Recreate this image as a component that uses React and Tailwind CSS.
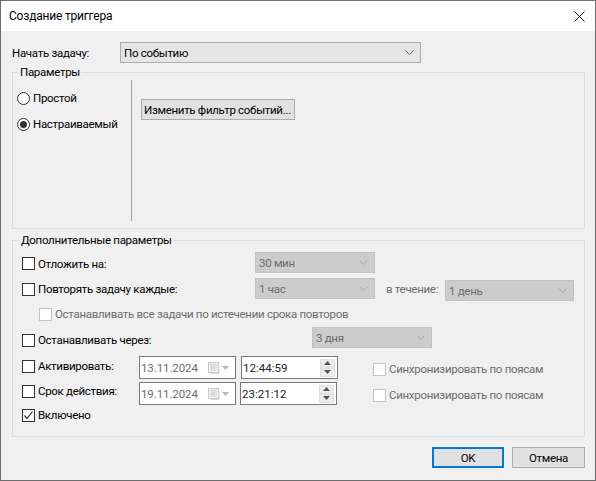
import React from "react";

function Chevron({ disabled }) {
  return (
    <svg width="9" height="5" viewBox="0 0 9 5" className="shrink-0">
      <polyline
        points="0.5,0.5 4.5,4.5 8.5,0.5"
        fill="none"
        stroke={disabled ? "#a8a8a8" : "#606060"}
        strokeWidth="1"
      />
    </svg>
  );
}

function Combo({ value, className = "", disabled }) {
  return (
    <div
      className={`flex items-center justify-between h-[21px] border pl-[3px] pr-[6px] shrink-0 ${
        disabled
          ? "bg-[#cccccc] border-[#c2c2c2] text-[#6d6d6d]"
          : "bg-[#e5e5e5] border-[#adadad] text-black"
      } ${className}`}
    >
      <span>{value}</span>
      <Chevron disabled={disabled} />
    </div>
  );
}

function Checkbox({ checked, disabled }) {
  return (
    <div
      className={`w-[13px] h-[13px] border bg-white shrink-0 flex items-center justify-center ${
        disabled ? "border-[#c4c4c4]" : "border-[#333333]"
      }`}
    >
      {checked && (
        <svg width="11" height="11" viewBox="0 0 11 11">
          <polyline
            points="1.5,5.5 4,8.5 9.5,1.5"
            fill="none"
            stroke="#333333"
            strokeWidth="1.2"
          />
        </svg>
      )}
    </div>
  );
}

function CheckRow({ label, checked, disabled, className = "" }) {
  return (
    <div className={`flex items-center gap-[3px] whitespace-nowrap ${className}`}>
      <Checkbox checked={checked} disabled={disabled} />
      <span className={disabled ? "text-[#6d6d6d]" : "text-black"}>{label}</span>
    </div>
  );
}

function Radio({ label, checked, className = "" }) {
  return (
    <div className={`flex items-center gap-[3px] h-[16px] ${className}`}>
      <div className="w-[13px] h-[13px] rounded-full border border-[#333333] bg-white flex items-center justify-center">
        {checked && <div className="w-[7px] h-[7px] rounded-full bg-[#333333]" />}
      </div>
      <span>{label}</span>
    </div>
  );
}

function CalendarIcon() {
  return (
    <div className="flex items-center gap-[2px] mr-[6px]">
      <svg width="12" height="12" viewBox="0 0 12 12">
        <rect x="0.5" y="0.5" width="10" height="10" fill="#f4f4f4" stroke="#c8c8c8" />
        <rect x="2" y="2" width="7" height="1" fill="#cfcfcf" />
        <path d="M2 4h7M2 6h7M2 8h7M4 4v5M6 4v5" stroke="#d2d2d2" strokeWidth="1" />
        <path d="M11 3v8.5H3" stroke="#d8d8d8" fill="none" />
      </svg>
      <svg width="7" height="4" viewBox="0 0 7 4">
        <polygon points="0,0 7,0 3.5,4" fill="#b8b8b8" />
      </svg>
    </div>
  );
}

function DateBox({ value, className = "" }) {
  return (
    <div
      className={`flex items-center justify-between h-[23px] border border-[#7a7a7a] bg-white pl-[1px] text-[#6d6d6d] shrink-0 ${className}`}
    >
      <span className="tracking-[-0.1px]">{value}</span>
      <CalendarIcon />
    </div>
  );
}

function SpinButton({ up }) {
  return (
    <div className="w-[15px] h-[9px] bg-[#ececec] border border-[#e0e0e0] flex items-center justify-center">
      <svg width="7" height="4" viewBox="0 0 7 4">
        <polygon points={up ? "0,4 7,4 3.5,0" : "0,0 7,0 3.5,4"} fill="#555555" />
      </svg>
    </div>
  );
}

function TimeBox({ value, className = "" }) {
  return (
    <div
      className={`flex items-center justify-between h-[23px] border border-[#7a7a7a] bg-white pl-[1px] pr-[2px] text-[#222222] shrink-0 ${className}`}
    >
      <span className="tracking-[0px]">{value}</span>
      <div className="flex flex-col">
        <SpinButton up />
        <SpinButton />
      </div>
    </div>
  );
}

export default function App() {
  return (
    <div className="w-[596px] h-[481px] border border-[#6e6e6e] bg-[#f0f0f0] flex flex-col font-['Roboto',sans-serif] text-[11.5px] tracking-[-0.3px] leading-[16px] text-black overflow-hidden">
      {/* Title bar */}
      <div className="h-[30px] bg-white flex items-center justify-between pl-[8px] pr-[10px] shrink-0">
        <span className="text-[12px] tracking-[-0.2px]">Создание триггера</span>
        <svg width="11" height="11" viewBox="0 0 11 11">
          <path d="M0.5 0.5L10.5 10.5M10.5 0.5L0.5 10.5" stroke="#111111" strokeWidth="1" />
        </svg>
      </div>

      {/* Body */}
      <div className="flex flex-col px-[11px] pr-[10px]">
        <div className="flex items-center mt-[11px]">
          <span className="w-[108px]">Начать задачу:</span>
          <Combo value="По событию" className="w-[301px]" />
        </div>

        {/* Параметры */}
        <div className="relative mt-[9px] h-[157px] border border-[#dcdcdc] flex">
          <span className="absolute -top-[9px] left-[6px] bg-[#f0f0f0] px-[1px]">Параметры</span>
          <div className="flex w-full py-[7px]">
            <div className="w-[119px] border-r border-[#a0a0a0] pl-[4px] flex flex-col">
              <Radio label="Простой" className="mt-[10px]" />
              <Radio label="Настраиваемый" checked className="mt-[10px]" />
            </div>
            <div className="pl-[9px] pt-[19px]">
              <div className="w-[154px] h-[21px] border border-[#adadad] bg-[#e1e1e1] flex items-center pl-[2px] whitespace-nowrap">
                Изменить фильтр событий...
              </div>
            </div>
          </div>
        </div>

        {/* Дополнительные параметры */}
        <div className="relative mt-[11px] h-[197px] border border-[#dcdcdc] flex flex-col pl-[9px]">
          <span className="absolute -top-[9px] left-[7px] bg-[#f0f0f0] px-[1px]">
            Дополнительные параметры
          </span>

          <div className="flex items-center h-[21px] mt-[11px]">
            <CheckRow label="Отложить на:" className="w-[233px] mt-[2px]" />
            <Combo value="30 мин" className="w-[120px]" disabled />
          </div>

          <div className="flex items-start h-[23px] mt-[5px]">
            <CheckRow label="Повторять задачу каждые:" className="w-[233px] mt-[3px]" />
            <Combo value="1 час" className="w-[120px]" disabled />
            <span className="w-[59px] ml-[11px] mt-[3px] text-[#6d6d6d] whitespace-nowrap">в течение:</span>
            <Combo value="1 день" className="w-[129px] mt-[2px]" disabled />
          </div>

          <div className="flex items-center h-[16px] mt-[5px] pl-[17px]">
            <CheckRow
              label="Останавливать все задачи по истечении срока повторов"
              disabled
            />
          </div>

          <div className="flex items-start h-[21px] mt-[5px]">
            <CheckRow label="Останавливать через:" className="w-[290px] mt-[5px]" />
            <Combo value="3 дня" className="w-[120px]" disabled />
          </div>

          <div className="flex items-start h-[23px] mt-[8px]">
            <CheckRow label="Активировать:" className="w-[117px] mt-[2px]" />
            <DateBox value="13.11.2024" className="w-[97px]" />
            <TimeBox value="12:44:59" className="w-[97px] ml-[5px]" />
            <CheckRow
              label="Синхронизировать по поясам"
              disabled
              className="ml-[35px] mt-[5px]"
            />
          </div>

          <div className="flex items-start h-[23px] mt-[3px]">
            <CheckRow label="Срок действия:" className="w-[117px] mt-[1px]" />
            <DateBox value="19.11.2024" className="w-[97px]" />
            <TimeBox value="23:21:12" className="w-[97px] ml-[4px]" />
            <CheckRow
              label="Синхронизировать по поясам"
              disabled
              className="ml-[36px] mt-[5px]"
            />
          </div>

          <div className="flex items-center h-[16px] mt-[2px]">
            <CheckRow label="Включено" checked />
          </div>
        </div>

        {/* Buttons */}
        <div className="flex justify-end gap-[8px] mt-[10px]">
          <div className="w-[72px] h-[21px] border-2 border-[#0078d7] bg-[#e1e1e1] flex items-center justify-center">
            OK
          </div>
          <div className="w-[73px] h-[21px] border border-[#adadad] bg-[#e1e1e1] flex items-center justify-center">
            Отмена
          </div>
        </div>
      </div>
    </div>
  );
}
